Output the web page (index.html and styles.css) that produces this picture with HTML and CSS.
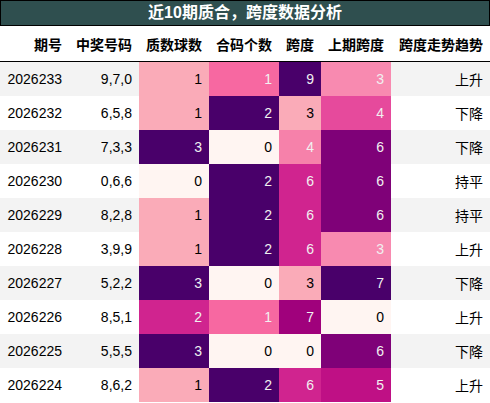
FILE: index.html
```html
<!DOCTYPE html>
<html lang="zh">
<head>
    <meta charset="UTF-8">
    <title>近10期质合，跨度数据分析</title>
    <link rel="stylesheet" href="styles.css">
</head>
<body>
    <div class="title">近10期质合，跨度数据分析</div>
    <table class="grid">
        <colgroup>
            <col class="w69"><col class="w70"><col class="w70"><col class="w70"><col class="w42"><col class="w70"><col>
        </colgroup>
        <thead>
            <tr>
                <th>期号</th><th>中奖号码</th><th>质数球数</th><th>合码个数</th><th>跨度</th><th>上期跨度</th><th>跨度走势趋势</th>
            </tr>
        </thead>
        <tbody>
            <tr><td>2026233</td><td>9,7,0</td><td class="c-pink">1</td><td class="c-hot">1</td><td class="c-deep">9</td><td class="c-rose">3</td><td>上升</td></tr>
            <tr><td>2026232</td><td>6,5,8</td><td class="c-pink">1</td><td class="c-deep">2</td><td class="c-pink">3</td><td class="c-cerise">4</td><td>下降</td></tr>
            <tr><td>2026231</td><td>7,3,3</td><td class="c-deep">3</td><td class="c-pale">0</td><td class="c-rose dk">4</td><td class="c-plum">6</td><td>下降</td></tr>
            <tr><td>2026230</td><td>0,6,6</td><td class="c-pale">0</td><td class="c-deep">2</td><td class="c-magenta">6</td><td class="c-plum">6</td><td>持平</td></tr>
            <tr><td>2026229</td><td>8,2,8</td><td class="c-pink">1</td><td class="c-deep">2</td><td class="c-magenta">6</td><td class="c-plum">6</td><td>持平</td></tr>
            <tr><td>2026228</td><td>3,9,9</td><td class="c-pink">1</td><td class="c-deep">2</td><td class="c-magenta">6</td><td class="c-rose">3</td><td>上升</td></tr>
            <tr><td>2026227</td><td>5,2,2</td><td class="c-deep">3</td><td class="c-pale">0</td><td class="c-pink">3</td><td class="c-deep">7</td><td>下降</td></tr>
            <tr><td>2026226</td><td>8,5,1</td><td class="c-magenta">2</td><td class="c-hot">1</td><td class="c-violet">7</td><td class="c-pale">0</td><td>上升</td></tr>
            <tr><td>2026225</td><td>5,5,5</td><td class="c-deep">3</td><td class="c-pale">0</td><td class="c-pale">0</td><td class="c-plum">6</td><td>下降</td></tr>
            <tr><td>2026224</td><td>8,6,2</td><td class="c-pink">1</td><td class="c-deep">2</td><td class="c-magenta">6</td><td class="c-berry">5</td><td>上升</td></tr>
        </tbody>
    </table>
</body>
</html>
```

FILE: styles.css
```css
body {
    margin: 0;
    background: #fff;
    font-family: "Liberation Sans", "Noto Sans CJK SC", sans-serif;
    color: #000;
}
.title {
    width: 488px;
    height: 24px;
    line-height: 24px;
    border: 1px solid #000;
    background: #2f4f4f;
    color: #fff;
    font-size: 16px;
    font-weight: bold;
    text-align: center;
}
.grid {
    width: 490px;
    table-layout: fixed;
    border-collapse: collapse;
    font-size: 14px;
}
.w69 { width: 69px; }
.w70 { width: 70px; }
.w42 { width: 42px; }
.grid th {
    height: 35px;
    padding: 0 7px 0 0;
    text-align: right;
    font-weight: bold;
    border-bottom: 1px solid #000;
    white-space: nowrap;
}
.grid td {
    height: 34px;
    padding: 0 7px 0 0;
    text-align: right;
    white-space: nowrap;
}
.grid tbody tr:nth-child(odd) {
    background: #f3f3f3;
}
.c-pale { background: #fff5f2; color: #000; }
.c-pink { background: #faabb8; color: #000; }
.c-rose { background: #f88ab0; color: #f1f1f1; }
.c-rose.dk { background: #f681aa; }
.c-hot { background: #f768a1; color: #f1f1f1; }
.c-cerise { background: #e64a9c; color: #f1f1f1; }
.c-magenta { background: #d0248f; color: #f1f1f1; }
.c-berry { background: #bf1085; color: #f1f1f1; }
.c-violet { background: #a0017c; color: #f1f1f1; }
.c-plum { background: #7f0178; color: #f1f1f1; }
.c-deep { background: #49006a; color: #f1f1f1; }
```
